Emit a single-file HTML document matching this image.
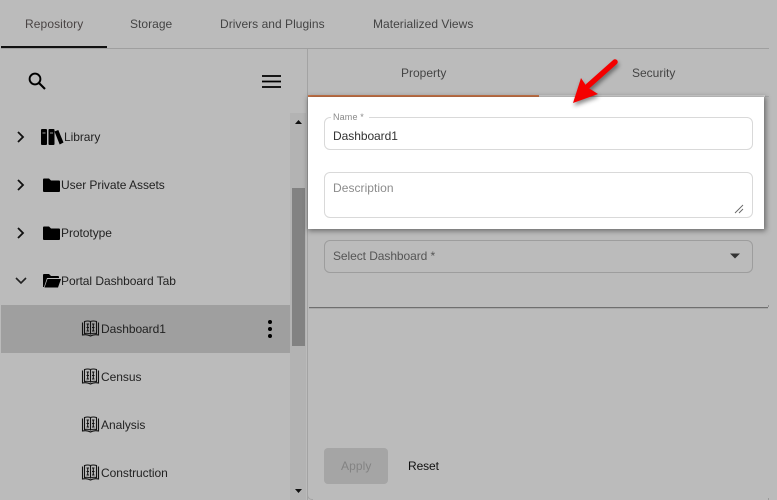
<!DOCTYPE html>
<html>
<head>
<meta charset="utf-8">
<style>
html,body{margin:0;padding:0}
body{width:777px;height:500px;overflow:hidden;background:#bbb;position:relative;font-family:"Liberation Sans",sans-serif;font-size:12px;color:#222}
.a{position:absolute}
.t{position:absolute;white-space:nowrap;line-height:16px}
svg{position:absolute;overflow:visible}
.tab{color:#444;letter-spacing:.03px;top:16px}
.tree{color:#222;letter-spacing:-.05px}
.f{position:absolute;left:324px;width:427px;border:1px solid #d9d9d9;border-radius:6px;box-sizing:content-box}
</style>
</head>
<body>
<!-- top tabs -->
<div class="t tab" style="left:25px;color:#4a4444;letter-spacing:.1px">Repository</div>
<div class="t tab" style="left:130px">Storage</div>
<div class="t tab" style="left:220px">Drivers and Plugins</div>
<div class="t tab" style="left:373px">Materialized Views</div>
<div class="a" style="left:1px;top:48px;width:768px;height:1px;background:#9f9f9f"></div>
<div class="a" style="left:1px;top:46px;width:106px;height:2px;background:#111"></div>

<!-- right panel outline -->
<div class="a" style="left:307px;top:49px;width:1px;height:451px;background:#a3a3a3"></div>
<div class="a" style="left:309px;top:307px;width:459px;height:1px;background:#6f6f6f"></div>
<div class="a" style="left:309px;top:308px;width:459px;height:1px;background:#a8a8a8"></div>
<div class="a" style="left:768px;top:305px;width:1px;height:2px;background:#8f8f8f"></div>
<div class="a" style="left:768px;top:498px;width:1px;height:2px;background:#9a9a9a"></div>
<div class="a" style="left:307px;top:494px;width:6px;height:6px;border-left:1px solid #a3a3a3;border-bottom:1px solid #a3a3a3;border-bottom-left-radius:5px;box-sizing:border-box;background:#bbb"></div>

<!-- search + menu icons -->
<svg style="left:27px;top:71px" width="20" height="20" viewBox="0 0 20 20"><circle cx="8" cy="8" r="5.4" fill="none" stroke="#000" stroke-width="1.9"/><path d="M12 12l6 6" stroke="#000" stroke-width="2.1" fill="none"/></svg>
<svg style="left:262px;top:74px" width="19" height="15" viewBox="0 0 19 15"><path d="M0 2h19M0 7.500h19M0 13h19" stroke="#000" stroke-width="1.700" fill="none"/></svg>

<!-- tree selected row -->
<div class="a" style="left:1px;top:305px;width:289px;height:48px;background:#9f9f9f"></div>

<!-- chevrons -->
<svg style="left:16px;top:131px" width="10" height="12" viewBox="0 0 10 12"><path d="M2 1l5 5-5 5" fill="none" stroke="#111" stroke-width="1.800"/></svg>
<svg style="left:16px;top:179px" width="10" height="12" viewBox="0 0 10 12"><path d="M2 1l5 5-5 5" fill="none" stroke="#111" stroke-width="1.800"/></svg>
<svg style="left:16px;top:227px" width="10" height="12" viewBox="0 0 10 12"><path d="M2 1l5 5-5 5" fill="none" stroke="#111" stroke-width="1.800"/></svg>
<svg style="left:15px;top:276px" width="12" height="10" viewBox="0 0 12 10"><path d="M1 2l5 5 5-5" fill="none" stroke="#222" stroke-width="1.600"/></svg>

<!-- Library icon -->
<svg style="left:41px;top:129px" width="22" height="16" viewBox="0 0 22 16"><path d="M0 1q0-1 1-1h4q1 0 1 1v14q0 1-1 1H1q-1 0-1-1zM7.500 1q0-1 1-1h4q1 0 1 1v14q0 1-1 1h-4q-1 0-1-1z" fill="#000"/><path d="M13.500 2.500l3.800-1.500 5.200 12.500-3.800 2z" fill="#000"/><path d="M1.500 4h3M9 4h3" stroke="#999" stroke-width="1"/></svg>
<!-- folders -->
<svg style="left:43px;top:178px" width="17" height="15" viewBox="0 0 17 15"><path d="M0 1.500Q0 .5 1 .5h5l2 2h8q1 0 1 1V13q0 1-1 1H1q-1 0-1-1z" fill="#000"/></svg>
<svg style="left:43px;top:226px" width="17" height="15" viewBox="0 0 17 15"><path d="M0 1.500Q0 .5 1 .5h5l2 2h8q1 0 1 1V13q0 1-1 1H1q-1 0-1-1z" fill="#000"/></svg>
<svg style="left:43px;top:274px" width="18" height="14" viewBox="0 0 18 14"><path d="M0 1Q0 0 1 0h5l2 2h7q1 0 1 1v1H4L1 13H0z" fill="#000"/><path d="M4.500 5H18l-3 8.500H1.500z" fill="#000"/></svg>
<!-- dashboard book icons -->
<svg style="left:82px;top:320px" width="17" height="17" viewBox="0 0 17 17"><path d="M2.500 1.500Q6 .5 8.500 1.500 11 .5 14.500 1.500V13.500Q11 12.800 8.500 14 6 12.800 2.500 13.500zM.5 2.500V15Q5 14 8.500 16 12 14 16.500 15V2.500M8.500 1.500V14" fill="none" stroke="#111" stroke-width="1.100"/><path d="M4.500 4H7M10 4h2.500M4.500 7.500H7M10 7.500h2.500M4.500 11H7M10 11h2.500M5.700 3.500v8M11.300 3.500v8" fill="none" stroke="#111" stroke-width="1.100"/></svg>
<svg style="left:82px;top:368px" width="17" height="17" viewBox="0 0 17 17"><path d="M2.500 1.500Q6 .5 8.500 1.500 11 .5 14.500 1.500V13.500Q11 12.800 8.500 14 6 12.800 2.500 13.500zM.5 2.500V15Q5 14 8.500 16 12 14 16.500 15V2.500M8.500 1.500V14" fill="none" stroke="#111" stroke-width="1.100"/><path d="M4.500 4H7M10 4h2.500M4.500 7.500H7M10 7.500h2.500M4.500 11H7M10 11h2.500M5.700 3.500v8M11.300 3.500v8" fill="none" stroke="#111" stroke-width="1.100"/></svg>
<svg style="left:82px;top:416px" width="17" height="17" viewBox="0 0 17 17"><path d="M2.500 1.500Q6 .5 8.500 1.500 11 .5 14.500 1.500V13.500Q11 12.800 8.500 14 6 12.800 2.500 13.500zM.5 2.500V15Q5 14 8.500 16 12 14 16.500 15V2.500M8.500 1.500V14" fill="none" stroke="#111" stroke-width="1.100"/><path d="M4.500 4H7M10 4h2.500M4.500 7.500H7M10 7.500h2.500M4.500 11H7M10 11h2.500M5.700 3.500v8M11.300 3.500v8" fill="none" stroke="#111" stroke-width="1.100"/></svg>
<svg style="left:82px;top:464px" width="17" height="17" viewBox="0 0 17 17"><path d="M2.500 1.500Q6 .5 8.500 1.500 11 .5 14.500 1.500V13.500Q11 12.800 8.500 14 6 12.800 2.500 13.500zM.5 2.500V15Q5 14 8.500 16 12 14 16.500 15V2.500M8.500 1.500V14" fill="none" stroke="#111" stroke-width="1.100"/><path d="M4.500 4H7M10 4h2.500M4.500 7.500H7M10 7.500h2.500M4.500 11H7M10 11h2.500M5.700 3.500v8M11.300 3.500v8" fill="none" stroke="#111" stroke-width="1.100"/></svg>

<!-- tree text -->
<div class="t tree" style="left:64px;top:129px">Library</div>
<div class="t tree" style="left:61px;top:177px">User Private Assets</div>
<div class="t tree" style="left:61px;top:225px">Prototype</div>
<div class="t tree" style="left:61px;top:273px">Portal Dashboard Tab</div>
<div class="t tree" style="left:101px;top:321px">Dashboard1</div>
<div class="t tree" style="left:101px;top:369px">Census</div>
<div class="t tree" style="left:101px;top:417px">Analysis</div>
<div class="t tree" style="left:101px;top:465px">Construction</div>

<!-- kebab -->
<svg style="left:267px;top:320px" width="6" height="19" viewBox="0 0 6 19"><circle cx="3" cy="2" r="2" fill="#000"/><circle cx="3" cy="9" r="2" fill="#000"/><circle cx="3" cy="16" r="2" fill="#000"/></svg>

<!-- scrollbar -->
<div class="a" style="left:290px;top:113px;width:16px;height:387px;background:#b3b3b3"></div>
<div class="a" style="left:292px;top:188px;width:13px;height:158px;background:#828282"></div>
<svg style="left:294px;top:119px" width="9" height="6" viewBox="0 0 9 6"><path d="M1 5L4.500 1 8 5z" fill="#111"/></svg>
<svg style="left:294px;top:488px" width="9" height="6" viewBox="0 0 9 6"><path d="M1 1L4.500 5 8 1z" fill="#111"/></svg>

<!-- inner tabs -->
<div class="t" style="left:401px;top:65px;color:#444">Property</div>
<div class="t" style="left:632px;top:65px;color:#444">Security</div>
<div class="a" style="left:308px;top:95px;width:231px;height:2px;background:#d07a4c"></div>
<div class="a" style="left:764px;top:96px;width:5px;height:1px;background:#a8a8a8"></div>

<!-- white highlighted card -->
<div class="a" style="left:539px;top:95px;width:226px;height:2px;background:#d8d8d8"></div>
<div class="a" style="left:308px;top:97px;width:456px;height:132px;background:#fff;box-shadow:1px 1px 5px 1px rgba(0,0,0,.42)"></div>
<div class="f" style="top:117px;height:31px"></div>
<div class="a" style="left:331px;top:112px;width:38px;height:10px;background:#fff"></div>
<div class="t" style="left:333px;top:110px;font-size:9px;line-height:14px;color:#8a8a8a;letter-spacing:.15px">Name *</div>
<div class="t" style="left:333px;top:128px;color:#333;letter-spacing:-.05px">Dashboard1</div>
<div class="f" style="top:172px;height:44px"></div>
<div class="t" style="left:333px;top:180px;color:#8c8c8c;letter-spacing:.05px">Description</div>
<svg style="left:734px;top:204px" width="10" height="10" viewBox="0 0 10 10"><path d="M1 9L9 1M5 9L9 5" stroke="#666" stroke-width=".9" fill="none"/></svg>

<!-- select -->
<div class="a" style="left:324px;top:240px;width:429px;height:33px;box-sizing:border-box;border:1px solid #9d9d9d;border-radius:6px"></div>
<div class="t" style="left:333px;top:248px;color:#555;letter-spacing:-.07px">Select Dashboard *</div>
<svg style="left:730px;top:253px" width="10" height="6" viewBox="0 0 10 6"><path d="M0 .5h10L5 5.500z" fill="#333"/></svg>

<!-- buttons -->
<div class="a" style="left:324px;top:448px;width:64px;height:36px;background:#a5a5a5;border-radius:4px"></div>
<div class="t" style="left:341px;top:458px;color:#838383;letter-spacing:.1px">Apply</div>
<div class="t" style="left:408px;top:458px;color:#111;letter-spacing:-.1px">Reset</div>

<!-- red arrow -->
<svg style="left:560px;top:50px;filter:drop-shadow(1px 3px 2px rgba(0,0,0,.45))" width="70" height="60" viewBox="0 0 70 60">
<path d="M55 12L28 36" stroke="#f40000" stroke-width="5.500" stroke-linecap="round" fill="none"/>
<path d="M13 53L21 28 27 37 38 44z" fill="#f40000"/>
</svg>
</body>
</html>
